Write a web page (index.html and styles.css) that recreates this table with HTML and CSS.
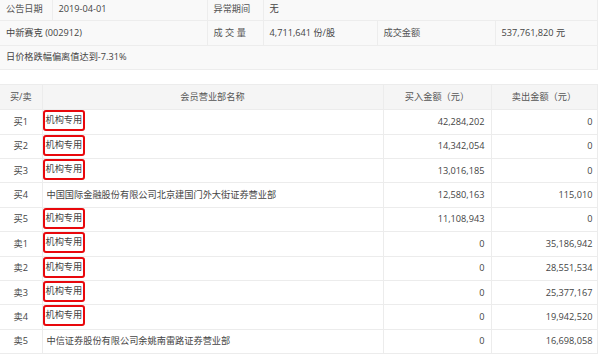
FILE: index.html
```html
<!DOCTYPE html>
<html lang="zh-CN">
<head>
  <meta charset="UTF-8" />
  <title>龙虎榜 - 中新赛克</title>
  <link rel="stylesheet" href="styles.css">
</head>
<body>
  <table class="info-table">
    <colgroup>
      <col style="width:52px"><col style="width:155px"><col style="width:56px">
      <col style="width:114px"><col style="width:118px"><col style="width:102px">
    </colgroup>
    <tr class="first">
      <td class="label">公告日期</td>
      <td>2019-04-01</td>
      <td class="label">异常期间</td>
      <td colspan="3">无</td>
    </tr>
    <tr>
      <td colspan="2">中新赛克 (002912)</td>
      <td class="label">成 交 量</td>
      <td>4,711,641 份/股</td>
      <td class="label">成交金额</td>
      <td>537,761,820 元</td>
    </tr>
    <tr>
      <td colspan="6">日价格跌幅偏离值达到-7.31%</td>
    </tr>
  </table>

  <table class="trade-table">
    <colgroup>
      <col style="width:42px"><col style="width:341px"><col style="width:108px"><col style="width:106px">
    </colgroup>
    <thead>
      <tr>
        <th>买/卖</th>
        <th>会员营业部名称</th>
        <th>买入金额（元）</th>
        <th>卖出金额（元）</th>
      </tr>
    </thead>
    <tbody>
      <tr><td class="side">买1</td><td class="name"><span class="tag">机构专用</span></td><td class="num">42,284,202</td><td class="num">0</td></tr>
      <tr><td class="side">买2</td><td class="name"><span class="tag">机构专用</span></td><td class="num">14,342,054</td><td class="num">0</td></tr>
      <tr><td class="side">买3</td><td class="name"><span class="tag">机构专用</span></td><td class="num">13,016,185</td><td class="num">0</td></tr>
      <tr><td class="side">买4</td><td class="name">中国国际金融股份有限公司北京建国门外大街证券营业部</td><td class="num">12,580,163</td><td class="num">115,010</td></tr>
      <tr><td class="side">买5</td><td class="name"><span class="tag">机构专用</span></td><td class="num">11,108,943</td><td class="num">0</td></tr>
      <tr><td class="side">卖1</td><td class="name"><span class="tag">机构专用</span></td><td class="num">0</td><td class="num">35,186,942</td></tr>
      <tr><td class="side">卖2</td><td class="name"><span class="tag">机构专用</span></td><td class="num">0</td><td class="num">28,551,534</td></tr>
      <tr><td class="side">卖3</td><td class="name"><span class="tag">机构专用</span></td><td class="num">0</td><td class="num">25,377,167</td></tr>
      <tr><td class="side">卖4</td><td class="name"><span class="tag">机构专用</span></td><td class="num">0</td><td class="num">19,942,520</td></tr>
      <tr><td class="side">卖5</td><td class="name">中信证券股份有限公司余姚南雷路证券营业部</td><td class="num">0</td><td class="num">16,698,058</td></tr>
    </tbody>
  </table>
</body>
</html>
```

FILE: styles.css
```css
body {
  margin: 0;
  font-family: 'Open Sans', 'Noto Sans CJK SC', sans-serif;
  font-size: 9.2px;
  color: #333;
  background-color: #fff;
}

table {
  width: 597px;
  table-layout: fixed;
  border-collapse: collapse;
}

td, th {
  padding: 0 4px;
  line-height: 14px;
  white-space: nowrap;
  overflow: hidden;
}

/* 上方概要 */
.info-table {
  margin-top: -3px;
  background-color: #f9f9f9;
}

.info-table td {
  height: 23.4px;
  border: 1px solid #ededed;
  padding-left: 6px;
  color: #444;
}

.info-table .label {
  color: #555;
}

.info-table tr:first-child td {
  border-top: none;
}

.info-table td:first-child {
  border-left: none;
}

/* 买卖明细 */
.trade-table {
  margin-top: 14px;
}

.trade-table th {
  height: 24px;
  background-color: #f5f5f5;
  border: 1px solid #ececec;
  font-weight: normal;
  color: #555;
  text-align: center;
}

.trade-table td {
  height: 23.4px;
  border: 1px solid #ececec;
  color: #444;
}

.trade-table th:first-child,
.trade-table td:first-child {
  border-left: none;
}

.side {
  text-align: center;
}

.name {
  padding-left: 4px;
}

.num {
  text-align: right;
  padding-right: 6px;
}

.trade-table td.num:last-child {
  padding-right: 4px;
}

.tag {
  display: inline-block;
  margin-left: -4px;
  padding: 1px 1px 2px;
  border: 2px solid #e8080c;
  border-radius: 3px;
  line-height: 14px;
  vertical-align: middle;
  position: relative;
  top: -1px;
}
```
